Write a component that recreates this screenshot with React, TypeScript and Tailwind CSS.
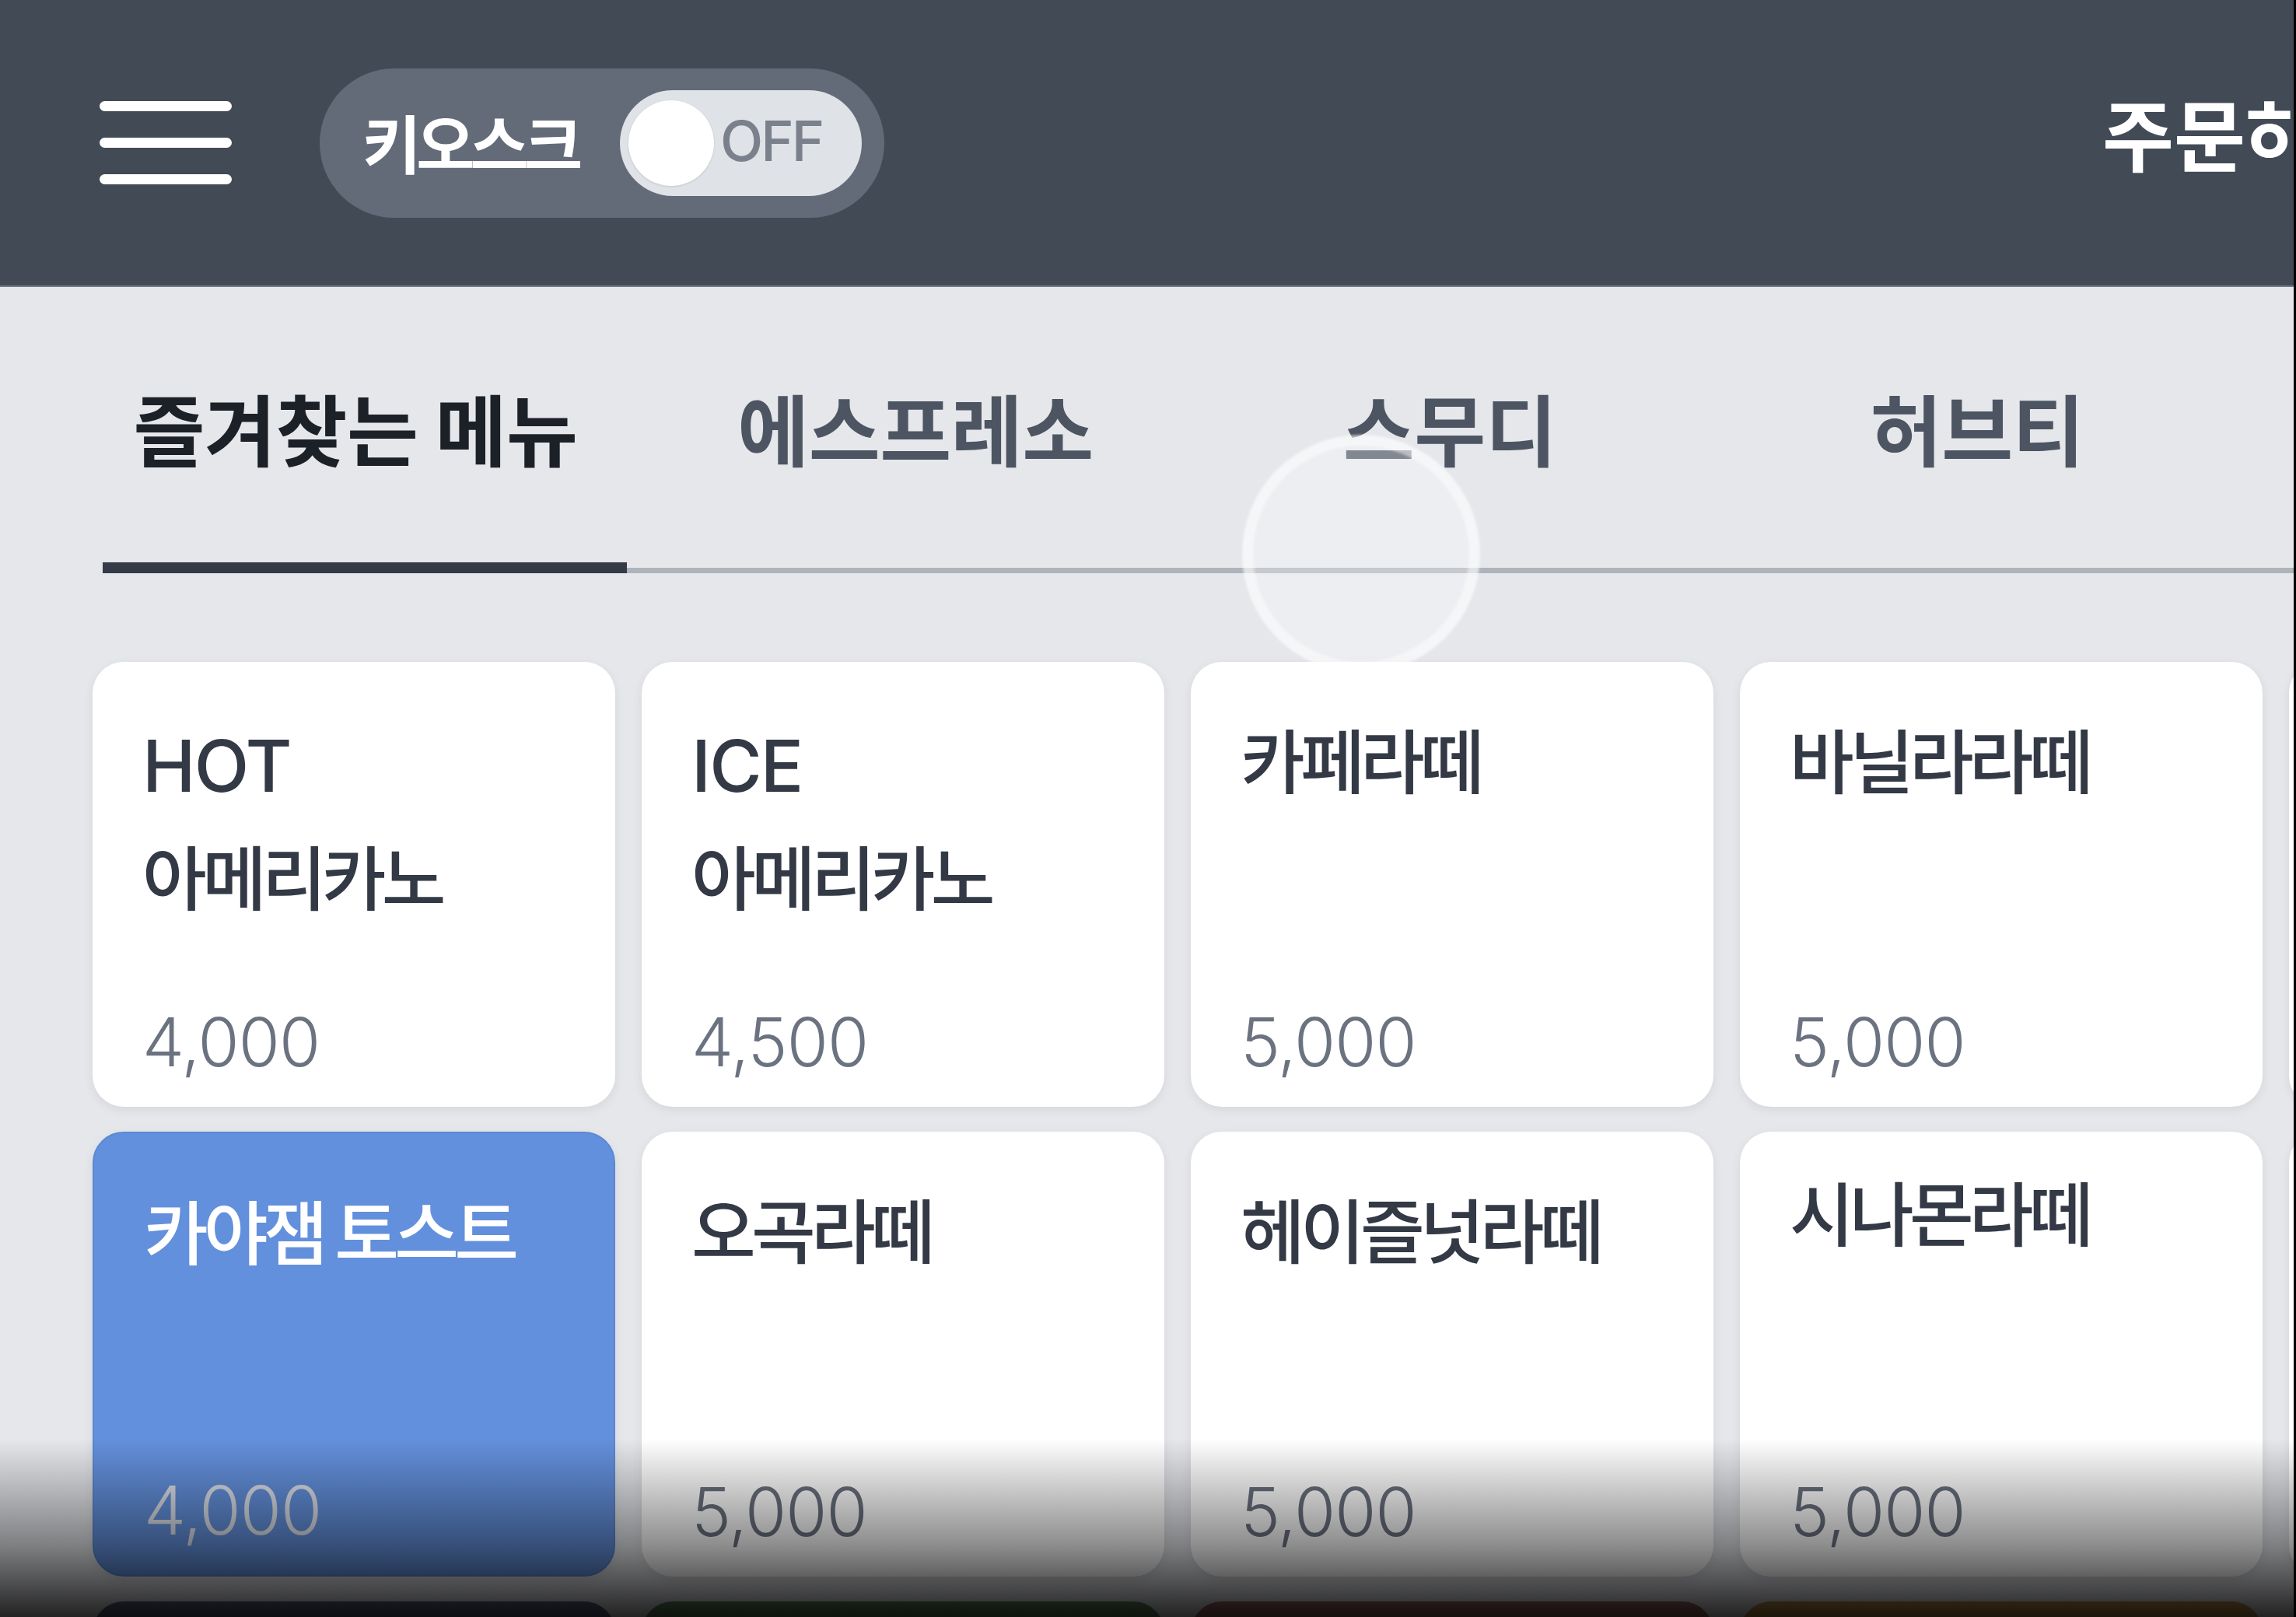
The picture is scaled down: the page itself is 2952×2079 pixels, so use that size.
import React from 'react';

type Item = {
  title: string[];
  price?: string;
  tone?: 'white' | 'blue' | 'slate' | 'green' | 'red' | 'yellow';
  lift?: boolean;
};

const rows: Item[][] = [
  [
    { title: ['HOT', '아메리카노'], price: '4,000' },
    { title: ['ICE', '아메리카노'], price: '4,500' },
    { title: ['카페라떼'], price: '5,000' },
    { title: ['바닐라라떼'], price: '5,000' },
    { title: [] },
  ],
  [
    { title: ['카야잼 토스트'], price: '4,000', tone: 'blue' },
    { title: ['오곡라떼'], price: '5,000' },
    { title: ['헤이즐넛라떼'], price: '5,000' },
    { title: ['시나몬라떼'], price: '5,000', lift: true },
    { title: [] },
  ],
  [
    { title: [], tone: 'slate' },
    { title: [], tone: 'green' },
    { title: [], tone: 'red' },
    { title: [], tone: 'yellow' },
    { title: [] },
  ],
];

const toneClass: Record<string, string> = {
  white: 'bg-white text-[#333945]',
  blue: 'bg-[#6390dc] border-2 border-[#5b88d4] text-white',
  slate: 'bg-[#555f78]',
  green: 'bg-[#5f825a]',
  red: 'bg-[#9b6464]',
  yellow: 'bg-[#be9146]',
};

const tabs = [
  { label: '즐겨찾는 메뉴', width: 'w-[674px] pr-[24px]', active: true },
  { label: '에스프레소', width: 'w-[742px]' },
  { label: '스무디', width: 'w-[632px]' },
  { label: '허브티', width: 'w-[724px]' },
];

const isLatin = (s: string) => /^[A-Za-z ]+$/.test(s);

const MenuCard: React.FC<{ item: Item }> = ({ item }) => {
  const tone = item.tone ?? 'white';
  return (
    <div
      className={`flex flex-col justify-between rounded-[40px] pl-[64px] pt-[48px] pb-[40px] shadow-[0_4px_14px_rgba(0,0,0,0.07)] ${toneClass[tone]}`}
    >
      <div className={`font-medium leading-[150px] ${item.lift ? '-mt-[22px]' : ''}`}>
        {item.title.map((line) =>
          isLatin(line) ? (
            <div
              key={line}
              className="relative top-[11px] whitespace-nowrap font-['Inter',sans-serif] text-[92px] tracking-[-0.02em]"
            >
              {line}
            </div>
          ) : (
            <div key={line} className="whitespace-nowrap text-[90px] tracking-[-0.065em]">
              {line}
            </div>
          )
        )}
      </div>
      {item.price && (
        <div
          className={`font-['Inter',sans-serif] font-light text-[86px] leading-none tracking-[-0.01em] ${
            tone === 'blue' ? 'text-[#dde2ea]' : 'text-[#6b7280]'
          }`}
        >
          {item.price}
        </div>
      )}
    </div>
  );
};

export default function App() {
  return (
    <div className="w-[2952px] h-[2079px] bg-black overflow-hidden">
      <div className="relative w-[2949px] h-full bg-[#e5e7eb] overflow-hidden font-['Noto_Sans_CJK_KR',sans-serif]">
        {/* Header */}
        <header className="h-[369px] bg-[#424a55] border-b-2 border-[#737a84] flex items-center overflow-hidden">
          <div className="ml-[128px] w-[170px] flex flex-col gap-[34px] shrink-0">
            <span className="h-[13px] rounded-full bg-white" />
            <span className="h-[13px] rounded-full bg-white" />
            <span className="h-[13px] rounded-full bg-white" />
          </div>

          <div className="ml-[113px] h-[192px] w-[726px] shrink-0 rounded-full bg-[#636b78] flex items-center pl-[55px] pr-[29px]">
            <span className="-mt-[4px] text-white font-semibold text-[82px] leading-none tracking-[-0.075em] whitespace-nowrap">
              키오스크
            </span>
            <div className="ml-auto h-[136px] w-[311px] rounded-full bg-[#dfe2e6] flex items-center pl-[11px]">
              <span className="h-[110px] w-[110px] rounded-full bg-white shadow-[0_1px_3px_rgba(0,0,0,0.12)]" />
              <span className="ml-[8px] -mt-[6px] font-['Inter',sans-serif] font-medium text-[72px] leading-none tracking-[-0.04em] text-[#7a818d]">
                OFF
              </span>
            </div>
          </div>

          <div className="ml-[1566px] -mt-[28px] shrink-0 whitespace-nowrap text-white font-bold text-[100px] leading-none">
            주문하기
          </div>
        </header>

        {/* Category tabs */}
        <div className="ml-[132px] h-[368px] flex shadow-[inset_0_-7px_0_#aeb4bb]">
          {tabs.map((tab) => (
            <div
              key={tab.label}
              className={`${tab.width} shrink-0 h-full flex justify-center pt-[130px] ${
                tab.active ? 'border-b-[14px] border-[#343b47]' : ''
              }`}
            >
              <span
                className={`text-[100px] leading-none tracking-[-0.005em] whitespace-nowrap ${
                  tab.active ? 'font-bold text-[#1c2027]' : 'font-semibold text-[#4d5562]'
                }`}
              >
                {tab.label}
              </span>
            </div>
          ))}
        </div>

        {/* Menu grid */}
        <div className="mt-[114px] ml-[119px] grid grid-cols-[repeat(5,672px)] auto-rows-[572px] gap-x-[34px] gap-y-[32px]">
          {rows.flat().map((item, i) => (
            <MenuCard key={i} item={item} />
          ))}
        </div>

        {/* touch indicator */}
        <div className="pointer-events-none absolute left-[1597px] top-[559px] h-[306px] w-[306px] rounded-full border-[14px] border-white/45 bg-white/30 blur-[1.5px]" />

        {/* bottom fade */}
        <div className="pointer-events-none absolute left-0 right-0 bottom-0 h-[229px] bg-linear-to-b from-transparent via-black/45 via-60% to-black/85" />
      </div>
    </div>
  );
}
